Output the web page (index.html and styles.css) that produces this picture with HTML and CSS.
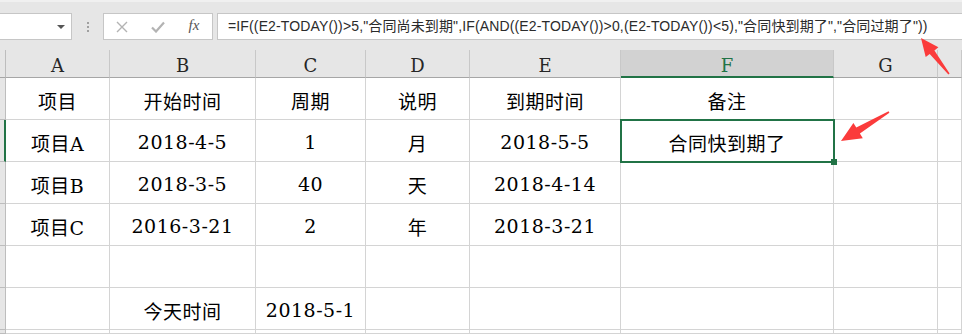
FILE: index.html
```html
<!DOCTYPE html>
<html>
<head>
    <meta charset='utf-8'>
    <title>合同到期</title>
    <link rel="stylesheet" href="styles.css">
</head>
<body>
    <div class="toolbar">
        <div class="namebox"><span class="caret"></span></div>
        <div class="grip"><i></i><i></i><i></i></div>
        <div class="fxbtns">
            <span class="slot">
                <svg width="12" height="12" viewBox="0 0 12 12"><path d="M1 1 L11 11 M11 1 L1 11" stroke="#b3b3b3" stroke-width="1.4" fill="none"/></svg>
            </span>
            <span class="slot">
                <svg width="14" height="12" viewBox="0 0 14 12"><path d="M1 6.5 L5 10.5 L13 1.5" stroke="#b3b3b3" stroke-width="2.2" fill="none"/></svg>
            </span>
            <span class="slot fx">fx</span>
        </div>
        <div class="formula">=IF((E2-TODAY())&gt;5,"合同尚未到期",IF(AND((E2-TODAY())&gt;0,(E2-TODAY())&lt;5),"合同快到期了","合同过期了"))</div>
    </div>

    <div class="sheet">
        <div class="corner"></div>
        <div class="colhead">A</div>
        <div class="colhead">B</div>
        <div class="colhead">C</div>
        <div class="colhead">D</div>
        <div class="colhead">E</div>
        <div class="colhead active">F</div>
        <div class="colhead">G</div>
        <div class="colhead"></div>

        <div class="rowhead"></div>
        <div class="cell">项目</div>
        <div class="cell">开始时间</div>
        <div class="cell">周期</div>
        <div class="cell">说明</div>
        <div class="cell">到期时间</div>
        <div class="cell">备注</div>
        <div class="cell"></div>
        <div class="cell"></div>

        <div class="rowhead active"></div>
        <div class="cell">项目A</div>
        <div class="cell">2018-4-5</div>
        <div class="cell">1</div>
        <div class="cell">月</div>
        <div class="cell">2018-5-5</div>
        <div class="cell selected">合同快到期了</div>
        <div class="cell"></div>
        <div class="cell"></div>

        <div class="rowhead"></div>
        <div class="cell">项目B</div>
        <div class="cell">2018-3-5</div>
        <div class="cell">40</div>
        <div class="cell">天</div>
        <div class="cell">2018-4-14</div>
        <div class="cell"></div>
        <div class="cell"></div>
        <div class="cell"></div>

        <div class="rowhead"></div>
        <div class="cell">项目C</div>
        <div class="cell">2016-3-21</div>
        <div class="cell">2</div>
        <div class="cell">年</div>
        <div class="cell">2018-3-21</div>
        <div class="cell"></div>
        <div class="cell"></div>
        <div class="cell"></div>

        <div class="rowhead"></div>
        <div class="cell"></div>
        <div class="cell"></div>
        <div class="cell"></div>
        <div class="cell"></div>
        <div class="cell"></div>
        <div class="cell"></div>
        <div class="cell"></div>
        <div class="cell"></div>

        <div class="rowhead"></div>
        <div class="cell"></div>
        <div class="cell">今天时间</div>
        <div class="cell">2018-5-1</div>
        <div class="cell"></div>
        <div class="cell"></div>
        <div class="cell"></div>
        <div class="cell"></div>
        <div class="cell"></div>

        <div class="rowhead"></div>
        <div class="cell"></div>
        <div class="cell"></div>
        <div class="cell"></div>
        <div class="cell"></div>
        <div class="cell"></div>
        <div class="cell"></div>
        <div class="cell"></div>
        <div class="cell"></div>
    </div>

    <!-- red annotation arrows drawn over the sheet -->
    <svg class="marks" width="962" height="334" viewBox="0 0 962 334">
        <polygon points="921,38 938.4,47.3 934.4,50.4 949.6,73.4 948.4,74.5 929.7,54 925.7,57.1" fill="#fb3b3b"/>
        <polygon points="841,141 853.4,122.9 856.3,127.6 888.6,111.3 889.4,112.7 859.9,133.6 862.8,138.3" fill="#fb3b3b"/>
    </svg>
</body>
</html>
```

FILE: styles.css
```css
*{
    box-sizing: border-box;
}
body{
    margin: 0px;
    width: 962px;
    height: 334px;
    overflow: hidden;
    background: #e6e6e6;
    position: relative;
}
.toolbar{
    display: flex;
    align-items: flex-start;
    height: 50px;
    padding-top: 11px;
    border-top: 2px solid #f0f0f0;
}
.namebox{
    width: 73px;
    height: 27px;
    margin-left: -1px;
    background: #fff;
    border: 1px solid #c6c6c6;
    display: flex;
    align-items: center;
    justify-content: flex-end;
    padding-right: 6px;
}
.caret{
    width: 0px;
    height: 0px;
    border-left: 4px solid transparent;
    border-right: 4px solid transparent;
    border-top: 4px solid #555;
}
.grip{
    margin-left: 15px;
    padding-top: 9px;
    display: flex;
    flex-direction: column;
    gap: 2px;
}
.grip i{
    width: 2px;
    height: 2px;
    background: #a0a0a0;
}
.fxbtns{
    margin-left: 14px;
    width: 110px;
    height: 27px;
    background: #fff;
    border: 1px solid #c6c6c6;
    display: flex;
}
.slot{
    width: 36px;
    display: flex;
    align-items: center;
    justify-content: center;
}
.fx{
    font-family: "Liberation Serif", serif;
    font-style: italic;
    font-size: 15px;
    color: #555;
    padding-bottom: 2px;
}
.formula{
    flex: 1;
    margin-left: 4px;
    margin-right: -2px;
    height: 27px;
    background: #fff;
    border: 1px solid #c6c6c6;
    padding-left: 10px;
    font-family: "Liberation Sans", "Noto Sans CJK SC", sans-serif;
    font-size: 14px;
    letter-spacing: 0.14px;
    line-height: 25px;
    color: #2b2b2b;
    white-space: nowrap;
    overflow: hidden;
}
.sheet{
    display: grid;
    grid-template-columns: 6px 104px 146px 110px 104px 151px 213px 104px 1fr;
    grid-template-rows: 28px repeat(6, 42px) 4px;
}
.corner{
    border-right: 1px solid #bdbdbd;
    border-bottom: 1px solid #a6a6a6;
}
.colhead{
    border-right: 1px solid #c8c8c8;
    border-bottom: 1px solid #a6a6a6;
    display: flex;
    align-items: center;
    justify-content: center;
    padding-top: 4px;
    font-family: "DejaVu Serif", serif;
    font-size: 18px;
    color: #262626;
}
.colhead.active{
    background: #d2d2d2;
    color: #217346;
    border-bottom: 2px solid #217346;
}
.rowhead{
    border-right: 1px solid #bdbdbd;
    border-bottom: 1px solid #bdbdbd;
}
.rowhead.active{
    border-right: 2px solid #217346;
}
.cell{
    background: #fff;
    border-right: 1px solid #d4d4d4;
    border-bottom: 1px solid #d4d4d4;
    display: flex;
    align-items: center;
    justify-content: center;
    padding-top: 3px;
    font-family: "DejaVu Serif", "Noto Sans CJK SC", serif;
    font-size: 19px;
    letter-spacing: 0.5px;
    color: #000;
    white-space: nowrap;
    overflow: hidden;
}
.selected{
    position: relative;
    overflow: visible;
}
.selected::after{
    content: "";
    position: absolute;
    top: -1px;
    left: -1px;
    right: -2px;
    bottom: -2px;
    border: 2px solid #217346;
}
.selected::before{
    content: "";
    position: absolute;
    right: -4px;
    bottom: -4px;
    width: 6px;
    height: 6px;
    background: #217346;
    z-index: 1;
}
.marks{
    position: absolute;
    top: 0px;
    left: 0px;
    pointer-events: none;
}
```
